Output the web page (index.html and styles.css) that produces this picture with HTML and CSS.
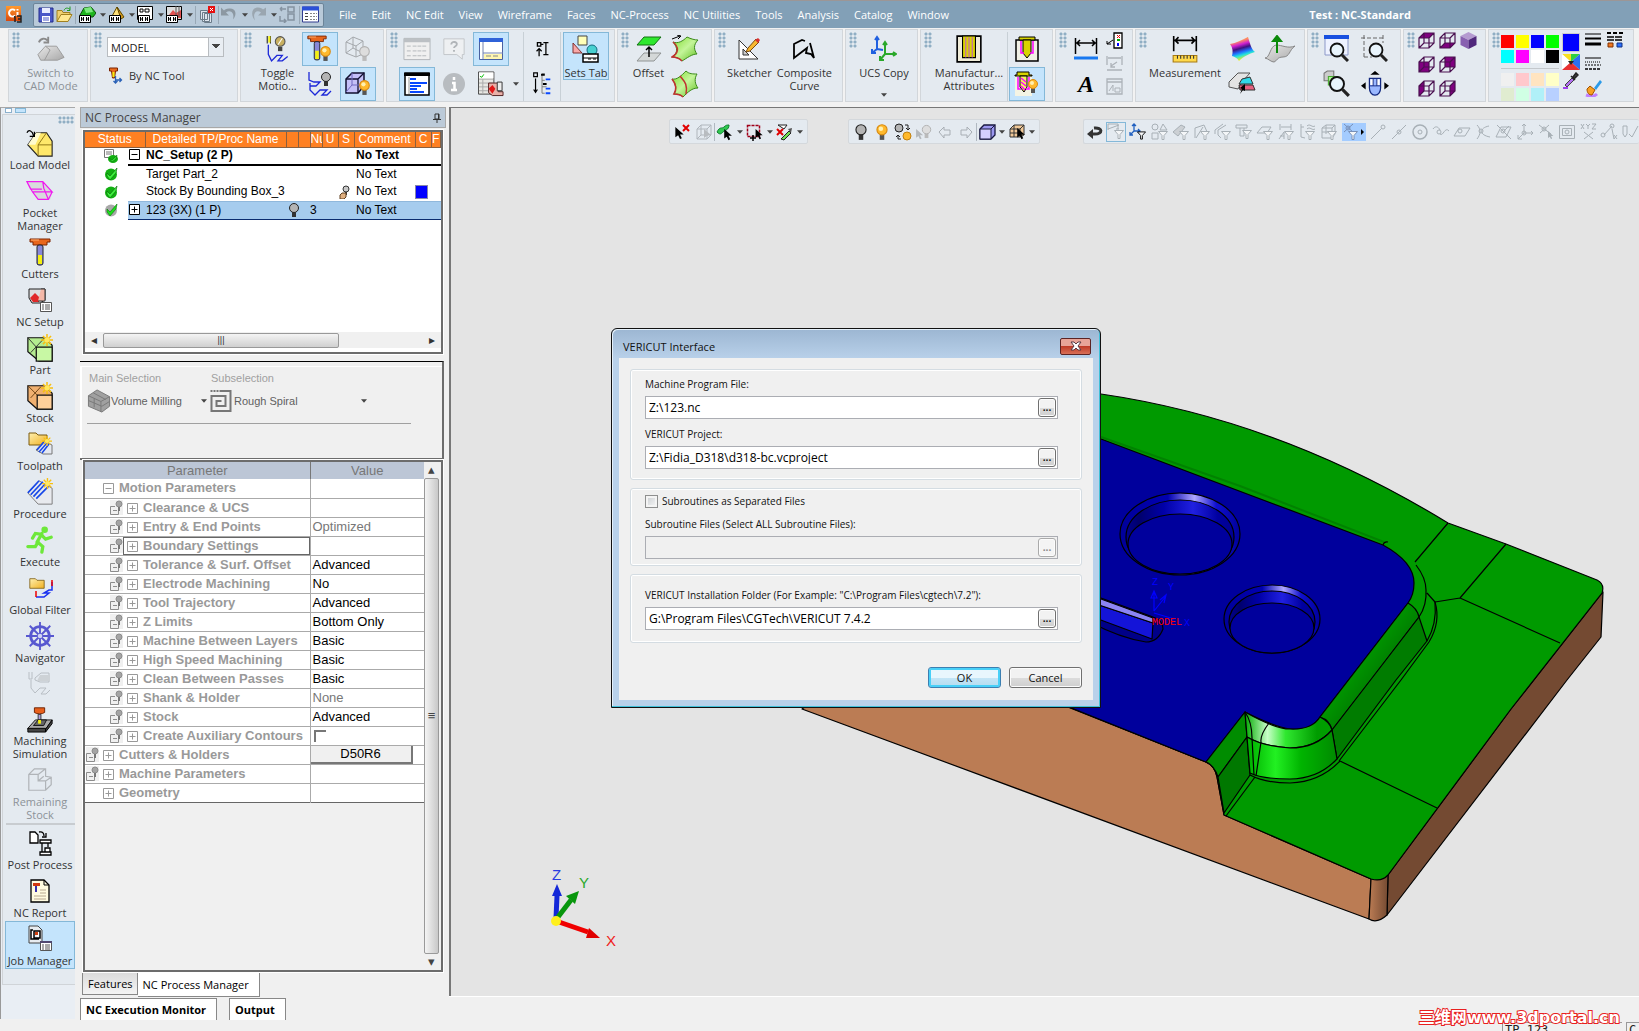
FILE: index.html
```html
<!DOCTYPE html>
<html lang="en">
<head>
    <meta charset="UTF-8">
    <meta name="viewport" content="width=device-width, initial-scale=1.0">
    <title>Test : NC-Standard</title>
    <link rel="stylesheet" href="styles.css">
</head>
<body>
    <!-- icon set -->
    <svg class="defs" aria-hidden="true">
        <defs>
            <linearGradient id="gGreen" x1="0" y1="0" x2="1" y2="1"><stop offset="0" stop-color="#7fdc2c"/><stop offset=".5" stop-color="#c4f59a"/><stop offset="1" stop-color="#5fbf1c"/></linearGradient>
            <linearGradient id="gRainbow" x1="0" y1="0" x2=".3" y2="1"><stop offset="0" stop-color="#ff4020"/><stop offset=".25" stop-color="#ff9060"/><stop offset=".4" stop-color="#d020d0"/><stop offset=".55" stop-color="#401080"/><stop offset=".7" stop-color="#2070ff"/><stop offset=".82" stop-color="#20e0e0"/><stop offset="1" stop-color="#f0f020"/></linearGradient>
            <linearGradient id="gGold" x1="0" y1="0" x2="1" y2="1"><stop offset="0" stop-color="#fff0b0"/><stop offset="1" stop-color="#f0b020"/></linearGradient>
            <linearGradient id="gGrey" x1="0" y1="0" x2="1" y2="1"><stop offset="0" stop-color="#e8e8e8"/><stop offset="1" stop-color="#a8a8a8"/></linearGradient>
            <linearGradient id="gApp" x1="0" y1="0" x2="0" y2="1"><stop offset="0" stop-color="#ff9a2e"/><stop offset="1" stop-color="#d8480c"/></linearGradient>

            <symbol id="arrow" viewBox="0 0 5 3"><path d="M0 0h5L2.500 3z" fill="#444"/></symbol>
            <symbol id="bulbOn" viewBox="0 0 16 16"><rect x="6" y="10" width="4" height="5" fill="#555"/><circle cx="8" cy="6" r="4.500" fill="#ffb92c" stroke="#d88a10"/><circle cx="7" cy="5" r="2" fill="#fff0b0"/></symbol>
            <symbol id="bulbOff" viewBox="0 0 16 16"><rect x="6" y="10" width="4" height="5" fill="#333"/><circle cx="8" cy="6" r="4.500" fill="#b4b4b4" stroke="#222"/></symbol>
            <symbol id="bulbPale" viewBox="0 0 16 16"><rect x="6" y="10" width="4" height="5" fill="#bbb"/><circle cx="8" cy="6" r="4.500" fill="#ddd" stroke="#b0b0b0"/></symbol>
            <symbol id="app" viewBox="0 0 17 17"><rect width="15" height="15" fill="url(#gApp)"/><path d="M9 4.500a3.500 3.500 0 1 0 0 5" stroke="#fff" stroke-width="2" fill="none"/><path d="M11.500 6v4M11.500 3v1.500" stroke="#fff" stroke-width="2"/><path d="M9 10v6M8 11h1M11 10h4v6h-4M12 13h3" stroke="#222" stroke-width="1.500" fill="none"/></symbol>
            <symbol id="save" viewBox="0 0 16 16"><path d="M1 1h14v14H1z" fill="#4a58c8" stroke="#232d8c"/><path d="M4 1h8v5H4z" fill="#e8ecff"/><path d="M4 9h8v6H4z" fill="#fff"/><path d="M5 11h6M5 13h6" stroke="#4a58c8"/></symbol>
            <symbol id="open" viewBox="0 0 17 16"><path d="M1 15V4h5l1 2h7v2" fill="#f0d070" stroke="#a08020"/><path d="M1 15l4-7h11l-4 7z" fill="#ffe890" stroke="#a08020"/><path d="M8 4c1-3 4-3 6-1M14 0v4h-3" stroke="#1e9a1e" fill="none"/></symbol>
            <symbol id="hh" viewBox="0 0 12 8"><path d="M.5.5h11v7H.5z" fill="#fff" stroke="#000"/><path d="M2.500 2v4M4.500 2v4M7.500 2v4M9.500 2v4M2 4h3M7 4h3" stroke="#000"/></symbol>
            <symbol id="qPart" viewBox="0 0 17 17"><path d="M1 9l4-7 7-1 5 6-3 4H4z" fill="#1eb41e" stroke="#0a500a"/><path d="M5 2l7-1 2 5-7 1z" fill="#7be87b"/><use href="#hh" x="0" y="9" width="12" height="8"/></symbol>
            <symbol id="qAsm" viewBox="0 0 17 17"><path d="M3 12L9 1l5 9z" fill="#ffe27a" stroke="#604800"/><path d="M9 1l7 10-3 2z" fill="#d09a20" stroke="#604800"/><use href="#hh" x="1" y="9" width="12" height="8"/></symbol>
            <symbol id="qDraw" viewBox="0 0 17 17"><path d="M.5.5h15v13H.5z" fill="#fff" stroke="#000"/><path d="M3 3h3v3H3zM8 3h4v3H8z" fill="none" stroke="#000"/><use href="#hh" x="1" y="9" width="12" height="8"/></symbol>
            <symbol id="qNc" viewBox="0 0 17 17"><path d="M.5.5h15v13H.5z" fill="#ddd" stroke="#000"/><path d="M3 9l4-5 3 3 5-3v8H5z" fill="#e05050"/><path d="M10 0v10M13 0v11" stroke="#555"/><use href="#hh" x="0" y="9" width="12" height="8"/></symbol>
            <symbol id="closeDocs" viewBox="0 0 17 17"><path d="M1.500 4.500h7v9h-7zM3.500 6.500h7v9h-7zM5.500 7.500h7v9h-7z" fill="#dfe6ee" stroke="#6c7c8a"/><rect x="9" width="7" height="7" fill="#e81010"/><path d="M11 2l3 3M14 2l-3 3" stroke="#fff"/></symbol>
            <symbol id="undo" viewBox="0 0 17 16"><path d="M0 1v8h8L5 6c4-3 9 0 7 7 5-6 2-12-4-11-3 0-4 1-5 2z" fill="#8c98a2"/></symbol>
            <symbol id="redo" viewBox="0 0 17 16"><path d="M16 1v8H8l3-3C7 3 2 6 5 14 0 8 2 1 8 1c3 0 4 1 5 2z" fill="#9aa6b0"/></symbol>
            <symbol id="swap" viewBox="0 0 17 17"><path d="M1 3h6M1 3l2-2M1 3l2 2M9 1h6v5H9zM1 10v5h6M5 13l2 2-2 2M9 8h6v6H9z" fill="none" stroke="#8492a0" stroke-width="1.500"/></symbol>
            <symbol id="winList" viewBox="0 0 17 16"><path d="M.5.5h16v15H.5z" fill="#fff" stroke="#333c90"/><path d="M0 0h17v4H0z" fill="#2a50d8"/><path d="M3 7h3M3 10h3M3 13h3" stroke="#444"/><path d="M8 7h7M8 10h7M8 13h7" stroke="#888" stroke-dasharray="2 1"/></symbol>

            <symbol id="cad" viewBox="0 0 30 26"><path d="M1 19l8-9h12l8 12-7 3H4z" fill="url(#gGrey)" stroke="#9a9a9a"/><path d="M9 10l5 4-6 11" fill="none" stroke="#999"/><path d="M2 6c2-5 7-5 9-2M12 0v6H7" fill="none" stroke="#8a8a8a" stroke-width="2"/></symbol>
            <symbol id="tool" viewBox="0 0 24 28"><path d="M2 1h20v3h-3v3H5V4H2z" fill="#e8661c" stroke="#7c2400"/><path d="M3 2h8" stroke="#ffb070"/><rect x="9" y="7" width="6" height="20" rx="2" fill="#8888d8" stroke="#222"/><rect x="10" y="17" width="4" height="9" fill="#f4f010"/></symbol>
            <symbol id="toolBulb" viewBox="0 0 28 28"><use href="#tool" x="0" y="0" width="22" height="26"/><use href="#bulbOn" x="11" y="10" width="17" height="17"/></symbol>
            <symbol id="toolAxis" viewBox="0 0 14 17"><path d="M1 1h8v3H7l-1 7H4L3 4H1z" fill="#e86a1c" stroke="#7c2400"/><path d="M4 5h2v5H4z" fill="#f4f010"/><path d="M7 16V9M7 13h6M11 11l2 2-2 2M5 14l2 2 2-2" stroke="#2a62b8" stroke-width="1.300" fill="none"/></symbol>
            <symbol id="motion" viewBox="0 0 24 26"><path d="M2 1v7M5 1v7" stroke="#222"/><path d="M3 1h2v6H3z" fill="#f4f010"/><path d="M3 9v9l3 6 5-5h5l-4 5h4l5-4" fill="none" stroke="#1c28d8" stroke-width="1.200"/><circle cx="14" cy="6" r="4.500" fill="#c8b060" stroke="#555"/><path d="M12 9l4-6" stroke="#fff"/><rect x="12" y="11" width="4" height="4" fill="#444"/></symbol>
            <symbol id="motionOff" viewBox="0 0 26 26"><path d="M2 1v8l5 2h6l-4 4H3M3 12v7l5 5 5-5h7l-5 5h5l4-4" fill="none" stroke="#1c28d8" stroke-width="1.300"/><use href="#bulbOff" x="11" y="0" width="16" height="16"/></symbol>
            <symbol id="wireCube" viewBox="0 0 26 26"><path d="M1 6l7-5 10 4v13l-7 3L1 17zM1 6l10 4 7-5M11 10v11M8 1v11l-7 5M8 12l10 5" fill="none" stroke="#a4a8ac"/><use href="#bulbPale" x="11" y="9" width="17" height="17"/></symbol>
            <symbol id="cubeBulb" viewBox="0 0 28 26"><path d="M2 8l6-6h12v13l-6 7H2z" fill="#c4c0f8" stroke="#101030" stroke-width="1.500"/><path d="M2 8h12v14M14 8l6-6" fill="none" stroke="#101030" stroke-width="1.300"/><path d="M8 2v12l-6 7M8 14h11" stroke="#7068c0" fill="none"/><use href="#bulbOn" x="12" y="8" width="17" height="17"/></symbol>
            <symbol id="listPale" viewBox="0 0 29 24"><path d="M1 1h27v22H1z" fill="#f0f0f0" stroke="#b0b4b8"/><path d="M1 1h27v4H1z" fill="#bcc0c4"/><path d="M4 9h4M4 14h4M4 19h4M10 9h15M10 14h15M10 19h15" stroke="#b4b8bc" stroke-dasharray="4 1"/></symbol>
            <symbol id="help" viewBox="0 0 26 24"><path d="M2 1h22v17h-2v5l-6-5H2z" fill="#eef0f2" stroke="#c0c4c8"/><path d="M10 7c0-4 7-3 6 0 0 2-3 2-3 4M13 13v2" stroke="#b0b4b8" stroke-width="2" fill="none"/></symbol>
            <symbol id="winLayout" viewBox="0 0 24 22"><path d="M.5.500h23v21H.5z" fill="#fff" stroke="#4a60a0"/><path d="M0 0h24v4H0z" fill="#2f62d8"/><path d="M4 4v17M4 15h20" stroke="#7080b0"/><path d="M5 16h18v5H5z" fill="#fff6b0"/><path d="M7 18h5M14 18h5" stroke="#888"/></symbol>
            <symbol id="gantt" viewBox="0 0 26 24"><path d="M1 1h24v22H1z" fill="#fff" stroke="#000" stroke-width="1.500"/><path d="M0 1h26v3H0z" fill="#000"/><path d="M6 7h6M6 11h17M6 14h11M6 17h7M6 20h14" stroke="#0848ff" stroke-width="2"/><path d="M5 5v17" stroke="#999"/></symbol>
            <symbol id="info" viewBox="0 0 24 24"><circle cx="12" cy="12" r="11" fill="#b8bcc0"/><path d="M12 5v3M10 11h2.500v7M9 18h6" stroke="#fff" stroke-width="2.500" fill="none"/></symbol>
            <symbol id="ncTable" viewBox="0 0 27 26"><path d="M.5.500h16v23H.5z" fill="#e8e8e4" stroke="#444"/><path d="M1 8h15M1 12h15M1 16h15M1 20h15M5 8v15" stroke="#aaa"/><path d="M1 1h15v6H1z" fill="#fff"/><path d="M2 5l2 1 2-3" stroke="#0b0" fill="none"/><path d="M11 12h10v9h5v4H15l-4-3z" fill="#e8b0a8" stroke="#502020"/><path d="M11 18l4-4 3 4-3 5z" fill="#e01818"/><path d="M20 11h5v9h-5z" fill="#eee" stroke="#333"/></symbol>
            <symbol id="treeUp" viewBox="0 0 16 20"><path d="M2 2h4v4H2zM4 18V9M1 12l3-3 3 3M6 4h3M9 2h6M9 16h6M12 2v14" fill="none" stroke="#000" stroke-width="1.500"/></symbol>
            <symbol id="treeDown" viewBox="0 0 20 26"><path d="M1 1h4v4H1zM3 7v15M1 19l2 3 2-3" fill="none" stroke="#000" stroke-width="1.300"/><path d="M10 2v21M10 2h3M10 9h3M10 23h3M10 16h5" stroke="#777" fill="none"/><path d="M14 8h5M14 18h5M14 23h5" stroke="#0848ff" stroke-width="2"/><path d="M9 3h4M11 13h4" stroke="#000" stroke-width="2"/></symbol>
            <symbol id="sets" viewBox="0 0 28 28"><path d="M6 1h9v9H6z" fill="#ffffb8" stroke="#444"/><path d="M1 8l9 10H1z" fill="#f8a8a8" stroke="#803030"/><circle cx="20" cy="15" r="5" fill="#48d0d0" stroke="#146a80"/><path d="M11 19h15v8H11z" fill="#fff" stroke="#000" stroke-width="1.500"/><path d="M11 23h15M16 24h3M21 24h3" stroke="#000"/></symbol>
            <symbol id="offset" viewBox="0 0 26 26"><path d="M8 1h17l-7 8H1z" fill="#2ee82e" stroke="#127012"/><path d="M8 17h17l-7 8H1z" fill="#d4d8d8" stroke="#909494"/><path d="M13 21V12M10 14l3-3 3 3" stroke="#000" stroke-width="1.500" fill="none"/></symbol>
            <symbol id="surfA" viewBox="0 0 28 28"><path d="M2 7c5 2 10-1 14-5 4 2 8 3 11 3-5 5-4 10-1 14-5 0-10 4-15 7-3-3-6-4-10-4 6-4 6-9 1-15z" fill="url(#gGreen)" stroke="#3c8a1c"/><path d="M2 7c6 5 6 11-1 15 4 0 7 1 10 4" stroke="#c03030" fill="none" stroke-width="1.500"/><path d="M1 4l8-3M6 0l4 1-3 3" stroke="#000" fill="none"/></symbol>
            <symbol id="surfB" viewBox="0 0 28 28"><path d="M1 9c5 1 9-3 14-8 3 3 7 3 11 3-3 5-2 10 1 14-6 0-10 4-15 9-3-3-6-3-9-3 3-5 2-10-2-15z" fill="url(#gGreen)" stroke="#3c8a1c"/><path d="M1 9c4 5 5 10 2 15 3 0 6 0 9 3M9 6c4 5 8 8 6 18" stroke="#c03030" fill="none" stroke-width="1.500"/></symbol>
            <symbol id="sketch" viewBox="0 0 24 24"><path d="M2 3v19h19z" fill="#fff" stroke="#333"/><path d="M6 12v6h6z" fill="#ccc" stroke="#333"/><path d="M9 15l2-4L19 2l3 3-9 9z" fill="#f8b830" stroke="#7a4a10"/><path d="M18 3l3-2 2 2-2 3z" fill="#d83030"/></symbol>
            <symbol id="curve" viewBox="0 0 24 24"><path d="M9 3L2 8v9l0 4 12-9M9 3l3 0M2 21V7l10-4-1 8 7-3 4 14M12 14l5-6" fill="none" stroke="none"/><path d="M13 4l-3-1-8 4v14l13-10-1 5 5 1 3 4-4-15" fill="none" stroke="#000" stroke-width="1.800"/></symbol>
            <symbol id="ucs" viewBox="0 0 26 26"><path d="M6 13V2M4 4l2-3 2 3M6 13l6 1M6 13l-5 4M1 13v4h4" fill="none" stroke="#2060e0" stroke-width="2"/><path d="M14 18V7M12 9l2-3 2 3M14 18h10M22 16l3 2-3 2M14 18l-5 6M9 20v4h4" fill="none" stroke="#2aa82a" stroke-width="2"/></symbol>
            <symbol id="mfg" viewBox="0 0 24 26"><path d="M1 1h22v24H1z" fill="#f0ecd8" stroke="#000" stroke-width="1.500"/><path d="M6 1v20h12V1z" fill="#d8d400" stroke="#000"/><path d="M9 2v19M12 2v19M15 2v19" stroke="#c060c0"/></symbol>
            <symbol id="drill" viewBox="0 0 24 26"><path d="M1 4h22v21H1z" fill="#f0f0e4" stroke="#000" stroke-width="1.500"/><path d="M4 1h16v3H4z" fill="#d8d400" stroke="#000"/><path d="M8 4h8v13l-4 5-4-5z" fill="#d8d400" stroke="#000"/><path d="M6 5v12h3M18 5v12h-3" stroke="#f0f" fill="none" stroke-width="1.500"/></symbol>
            <symbol id="drillBulb" viewBox="0 0 26 26"><path d="M1 3h17v22H1z" fill="#f4f4e4"/><path d="M3 1h12v3h3v1H1V4h2z" fill="#d8d400" stroke="#000"/><path d="M6 5h7v11l-3 5-4-5z" fill="#f4f060" stroke="#000"/><path d="M4 6v12h3M15 6v12h-3M7 7l5 4M7 11l5 4M7 15l4 4" stroke="#f0f" fill="none" stroke-width="1.500"/><use href="#bulbOn" x="11" y="7" width="16" height="16"/></symbol>
            <symbol id="dim" viewBox="0 0 24 24"><path d="M1.500 1v16M22.500 1v16M2 6h20M6 3L3 6l3 3M18 3l3 3-3 3" stroke="#000" fill="none" stroke-width="1.500"/><path d="M0 21h24" stroke="#1878f0" stroke-width="3"/></symbol>
            <symbol id="note" viewBox="0 0 17 17"><path d="M8 1h8v15H8z" fill="#fff" stroke="#000" stroke-width="1.300"/><path d="M7 8L1 12M1 9v3h4" stroke="#000" fill="none"/><path d="M11 3l3 3M14 3l-3 3" stroke="#e00"/><path d="M11 8h3" stroke="#0a0" stroke-width="2"/><path d="M12 11v3" stroke="#00f" stroke-width="2"/></symbol>
            <symbol id="dimPale" viewBox="0 0 17 17"><path d="M1 1v9M16 1v9M2 3h13M5 11l6-4M5 8v4h4M1 15h15" stroke="#acb2b8" fill="none" stroke-width="1.300"/></symbol>
            <symbol id="textPale" viewBox="0 0 17 17"><path d="M1 1h15v15H1zM1 4h15" stroke="#acb2b8" fill="none" stroke-width="1.300"/><path d="M3 13l4-6v6M9 10h5v4H9z" stroke="#acb2b8" fill="none"/></symbol>
            <symbol id="measure" viewBox="0 0 24 26"><path d="M1.500 1v14M22.500 1v14M2 5h20M6 2L3 5l3 3M18 2l3 3-3 3" stroke="#000" fill="none" stroke-width="1.500"/><path d="M1 19h22v6H1z" fill="#ffd94a" stroke="#a87a10"/><path d="M5 19v3M8 19v3M11 19v3M14 19v3M17 19v3M20 19v3" stroke="#333"/></symbol>
            <symbol id="rainbow" viewBox="0 0 28 28"><path d="M2 9c6-1 12-4 18-7 2 6 3 12 7 15-6 2-11 4-16 9-2-3-4-4-7-5 1-4 1-8-2-12z" fill="url(#gRainbow)"/></symbol>
            <symbol id="normal" viewBox="0 0 32 28"><path d="M1 23c5 0 5-12 11-13 6 0 12 4 19 1-6 4-5 11-12 11-6 0-6 4-9 5-3 0-5-3-9-4z" fill="url(#gGrey)" stroke="#888"/><path d="M13 18V3M9 6l4-5 4 5z" stroke="#0a8a0a" stroke-width="2" fill="#0a8a0a"/></symbol>
            <symbol id="pick" viewBox="0 0 28 24"><path d="M1 10L10 1h12l-8 9-4 7-9-2z" fill="#e4e4e4" stroke="#555"/><path d="M14 7l8-2 3 7H11z" fill="#30d8e8" stroke="#333"/><path d="M11 13h14l2 5H12z" fill="#e86080" stroke="#333"/><path d="M17 12l-5 4 2 1-2 5 3-4 2 1z" fill="#000"/></symbol>
            <symbol id="lens" viewBox="0 0 20 20"><circle cx="8" cy="8" r="6.500" fill="#e8f4fc" stroke="#111" stroke-width="1.800"/><path d="M13 13l6 6" stroke="#222" stroke-width="3"/></symbol>
            <symbol id="zoomWin" viewBox="0 0 26 28"><path d="M1 1h23v19H1z" fill="#eef2ff" stroke="#8c98c8"/><path d="M0 0h25v4H0z" fill="#1850e0"/><use href="#lens" x="5" y="7" width="20" height="20"/></symbol>
            <symbol id="zoomBox" viewBox="0 0 28 28"><path d="M3 0v22M0 3h22M22 0v8M3 22h8" stroke="#666" stroke-dasharray="4 2" fill="none"/><use href="#lens" x="7" y="7" width="20" height="20"/></symbol>
            <symbol id="zoomPart" viewBox="0 0 26 26"><path d="M1 3l3-2h6v7l-3 2H1z" fill="#ccc" stroke="#777"/><path d="M5 6h9v8H5z" fill="#a8f890" stroke="#48a830"/><use href="#lens" x="5" y="5" width="20" height="20"/></symbol>
            <symbol id="mouse" viewBox="0 0 30 28"><path d="M10 4l5-4 5 4zM0 16l5-4v8zM30 16l-5-4v8z" fill="#000"/><path d="M9 8h12v10c0 4-2 8-6 8s-6-4-6-8z" fill="#9ab8ff" stroke="#142a80" stroke-width="1.300"/><path d="M10 9h3v6h-3zM17 9h3v6h-3z" fill="#fff"/><path d="M9 16h12M13 8v8M17 8v8" stroke="#142a80"/></symbol>
            <symbol id="cw" viewBox="0 0 17 17"><path d="M1 6l5-5h10v10l-5 5H1zM1 6h10v10M11 6l5-5M6 1v10l-5 5M6 11h10" fill="none" stroke="#4a1050" stroke-width="1.200"/></symbol>
            <symbol id="cTop" viewBox="0 0 17 17"><path d="M1 6l5-5h10l-5 5z" fill="#800080"/><use href="#cw"/></symbol>
            <symbol id="cBot" viewBox="0 0 17 17"><path d="M1 16l5-5h10l-5 5z" fill="#800080"/><use href="#cw"/></symbol>
            <symbol id="cIso" viewBox="0 0 17 17"><path d="M8.500 0l8 4-8 4-8-4z" fill="#b49ad0"/><path d="M.5 4l8 4v9l-8-4z" fill="#8860b0"/><path d="M16.500 4l-8 4v9l8-4z" fill="#50287c"/></symbol>
            <symbol id="cFront" viewBox="0 0 17 17"><path d="M1 6h10v10H1z" fill="#800080"/><use href="#cw"/></symbol>
            <symbol id="cBack" viewBox="0 0 17 17"><path d="M6 1h10v10H6z" fill="#800080"/><use href="#cw"/></symbol>
            <symbol id="cLeft" viewBox="0 0 17 17"><path d="M1 6l5-5v10l-5 5z" fill="#800080"/><use href="#cw"/></symbol>
            <symbol id="cRight" viewBox="0 0 17 17"><path d="M11 6l5-5v10l-5 5z" fill="#800080"/><use href="#cw"/></symbol>
            <symbol id="wheel" viewBox="0 0 18 16"><path d="M0 0h9v8z" fill="#f8e020"/><path d="M9 0h9L9 8z" fill="#30d040"/><path d="M18 0v16L9 8z" fill="#2a70f0"/><path d="M0 0l9 8-9 8z" fill="#fff"/><path d="M0 16l9-8 9 8z" fill="#e83030"/><path d="M6 7h6l-3 4z" fill="#222"/></symbol>
            <symbol id="dropper" viewBox="0 0 17 17"><path d="M3 13l7-7 2 2-7 7z" fill="#b070f0" stroke="#444"/><path d="M9 4l4 4M11 5l3-4 2 2-4 4z" stroke="#222" fill="#444" stroke-width="1.500"/><path d="M1 16h5" stroke="#a040f0" stroke-width="2"/></symbol>
            <symbol id="widths" viewBox="0 0 16 16"><path d="M0 2h16" stroke="#000"/><path d="M0 6.500h16" stroke="#000" stroke-width="2"/><path d="M0 12h16" stroke="#000" stroke-width="3"/></symbol>
            <symbol id="styles" viewBox="0 0 16 16"><path d="M0 2h16" stroke="#000"/><path d="M0 6h16" stroke="#000" stroke-dasharray="1 1"/><path d="M0 9h16" stroke="#000" stroke-dasharray="2 1"/><path d="M0 13h16" stroke="#000" stroke-width="1.500" stroke-dasharray="3 1"/></symbol>
            <symbol id="lineCol" viewBox="0 0 16 16"><path d="M0 1h16" stroke="#000" stroke-width="2" stroke-dasharray="4 2"/><path d="M0 5h16M0 8h16" stroke="#000" stroke-width="1.500" stroke-dasharray="7 1"/><path d="M1 11h5v4H1z" fill="#f07820" stroke="#803000"/><path d="M10 11h5v4h-5z" fill="#2a70ff" stroke="#103080"/></symbol>
            <symbol id="brush" viewBox="0 0 17 17"><path d="M1 15c5 2 9 1 11-1" stroke="#c080ff" stroke-width="3" fill="none"/><path d="M2 9l3-3 5 4-3 5c-3 0-5-2-5-6z" fill="#f8a020" stroke="#a05000"/><path d="M9 8l6-8 2 2-6 8z" fill="#2a9ae8"/></symbol>

            <symbol id="star" viewBox="0 0 12 12"><path d="M6 0v12M0 6h12M2 2l8 8M10 2l-8 8" stroke="#f8c010" stroke-width="1.500"/><circle cx="6" cy="6" r="2.500" fill="#ffe860"/></symbol>
            <symbol id="load" viewBox="0 0 30 30"><path d="M2 17l9-13h11l6 9v16H13z" fill="#ffe86a" stroke="#222" stroke-width="1.200"/><path d="M2 17l9-13h5l-6 13z" fill="#fffbd0"/><path d="M13 29V17l9-13M13 17h15" fill="none" stroke="#8a7010"/><path d="M1 4c2-4 6-2 7 3M9 3v5H4" stroke="#000" fill="none" stroke-width="1.300"/></symbol>
            <symbol id="pocket" viewBox="0 0 30 24"><path d="M1 2h17l10 11-2 8H13z" fill="#d8dadc"/><path d="M1 2h17l10 11H7zM7 13l6 8h11l4-8M18 2l1 7 5 12M1 2l4 8h12" fill="none" stroke="#f018f0" stroke-width="1.300"/></symbol>
            <symbol id="setup" viewBox="0 0 28 28"><path d="M3 3h16v11l-5 3H6L3 12z" fill="#ddd" stroke="#222"/><path d="M4 12l5-5 4 4v5H7z" fill="#e02828"/><path d="M15 3h4v12h-7" fill="#f4b8a8" stroke="#333"/><path d="M14.500 16.500h11v9h-11z" fill="#fff" stroke="#555"/><path d="M16 19h2M16 21h2M16 23h2M19 19h5M19 21h5M19 23h5" stroke="#555"/></symbol>
            <symbol id="part" viewBox="0 0 30 30"><path d="M2 4h18l8 8v17H14L2 19z" fill="#b4ec90" stroke="#111" stroke-width="1.300"/><path d="M11 14h17v15H11z" fill="#c8f8a4" stroke="#111" stroke-width="1.300"/><path d="M2 4l9 10M5 20L20 4" stroke="#333" fill="none"/><use href="#star" x="16" y="0" width="13" height="13"/></symbol>
            <symbol id="stock" viewBox="0 0 30 30"><path d="M2 4h18l8 8v17H12L2 20z" fill="#f0b070" stroke="#111" stroke-width="1.300"/><path d="M12 14h16v15H12z" fill="#ffd09a" stroke="#111" stroke-width="1.300"/><path d="M2 4l10 10M5 17L16 5" stroke="#6a4010" fill="none"/><use href="#star" x="16" y="0" width="13" height="13"/></symbol>
            <symbol id="folder" viewBox="0 0 20 16"><path d="M1 2h7l2 2h9v10H1z" fill="url(#gGold)" stroke="#7a5a10"/></symbol>
            <symbol id="toolpath" viewBox="0 0 28 28"><use href="#folder" x="2" y="1" width="20" height="16"/><path d="M10 20l8-9 8 4v9h-9z" fill="#e4e8f0" stroke="#777"/><path d="M11 20l7-8M13 22l8-9M16 23l7-9" stroke="#1848e8" stroke-width="1.500"/><use href="#star" x="16" y="6" width="10" height="10"/></symbol>
            <symbol id="proc" viewBox="0 0 30 30"><path d="M2 16L14 3l14 8v17H13z" fill="#e8eaee" stroke="#777"/><path d="M2 16L14 3M5 18L18 4M8 20L20 7M11 22L24 9" stroke="#1848e8" stroke-width="1.800" fill="none"/><use href="#star" x="17" y="0" width="12" height="12"/></symbol>
            <symbol id="run" viewBox="0 0 30 30"><circle cx="20" cy="4" r="3.500" fill="#6ee83a"/><path d="M17 8l-5 9 6 5-1 6M13 17l-3 5H2M17 9L10 8l-3 5M17 10l4 4 6-2" stroke="#6ee83a" stroke-width="3.500" fill="none" stroke-linecap="round"/></symbol>
            <symbol id="gfilter" viewBox="0 0 28 28"><use href="#folder" x="3" y="3" width="16" height="13"/><path d="M26 8v8h-3l-5 3h5l-5 4h-8" stroke="#1830f0" fill="none" stroke-width="1.500"/><path d="M26 6v6M10 17v6" stroke="#e00" stroke-width="1.500"/></symbol>
            <symbol id="helm" viewBox="0 0 30 30"><path d="M15 0v30M0 15h30M4 4l22 22M26 4L4 26" stroke="#5858d0" stroke-width="2"/><circle cx="15" cy="15" r="10" fill="none" stroke="#5858d0" stroke-width="3"/><circle cx="15" cy="15" r="3" fill="#d0d4f4" stroke="#5858d0"/></symbol>
            <symbol id="handPale" viewBox="0 0 28 28"><path d="M3 2v7h3V2M5 10v8l4 5 5-5h6l-5 6h5l4-4M9 8l6-5h8v9h-9l-5-2z" fill="none" stroke="#b8bec4"/><path d="M14 5h10v6H11z" fill="#cdd2d6"/></symbol>
            <symbol id="machine" viewBox="0 0 28 30"><path d="M8 3h11v5c-3 2-8 2-11 0z" fill="#e8601c" stroke="#6a2000"/><path d="M12 10h3v8h-3z" fill="#b0a0e0" stroke="#333"/><path d="M1 25l8-9h18l-7 10H1z" fill="#aaa" stroke="#111"/><path d="M7 22l5-6h9l-3 6z" fill="#666" stroke="#111"/><path d="M1 25h19v4H1zM20 26l7-10v4l-7 9z" fill="#444" stroke="#000"/><path d="M12 16h3v4h-3z" fill="#f4f010"/></symbol>
            <symbol id="remain" viewBox="0 0 30 30"><path d="M3 9l6-6h12v8l6 1v8l-6 6H3zM3 9h10v7h8v10M13 9l8-6M21 16l6-4M13 16l6-5" fill="none" stroke="#b0b4b8" stroke-width="1.300"/></symbol>
            <symbol id="post" viewBox="0 0 28 28"><path d="M4 3h5l3 3v8H4z" fill="#fff" stroke="#000" stroke-width="1.300"/><path d="M13 3c4-1 5 2 5 4M20 4v4h-4" fill="none" stroke="#000" stroke-width="1.300"/><path d="M14 11h11v3H14zM16 14v9M22 14v4M14 23h11v3H14zM19 19h5v4h-5z" fill="#fff" stroke="#000" stroke-width="1.300"/></symbol>
            <symbol id="report" viewBox="0 0 24 28"><path d="M3 3h13l5 5v17H3z" fill="#fffbe0" stroke="#000" stroke-width="1.300"/><path d="M16 3v5h5" fill="none" stroke="#000"/><path d="M5 6h7v3H5z" fill="#d03810"/><path d="M8 9v6" stroke="#3830b0" stroke-width="2"/><path d="M12 13h6M12 16h6M6 19h12M6 22h12" stroke="#b8a890"/></symbol>
            <symbol id="job" viewBox="0 0 28 28"><path d="M3 1h9l4 4v13H3z" fill="#e8ecf0" stroke="#444"/><path d="M7 5H5v9h8M8 6h6v7H8z" stroke="#000" stroke-width="1.500" fill="#fff"/><path d="M9 7h3v3H9z" fill="#d04010"/><path d="M14.500 16.500h11v9h-11z" fill="#fff" stroke="#555"/><path d="M14 17h12" stroke="#504870" stroke-width="2"/><path d="M16 20h2M16 22h2M16 24h2M19 20h5M19 22h5M19 24h5" stroke="#555"/></symbol>

            <symbol id="ok" viewBox="0 0 14 14"><circle cx="7" cy="7.500" r="6" fill="#12b012"/><path d="M3 6l3 3 7-8-1 5-6 7-3-4z" fill="#3cf03c" stroke="#086008" stroke-width=".6"/></symbol>
            <symbol id="okGrey" viewBox="0 0 14 14"><circle cx="7" cy="7.500" r="6" fill="#a8a8a8"/><path d="M3 6l3 3 7-8-1 5-6 7-3-4z" fill="#1ce01c" stroke="#0a700a" stroke-width=".6"/></symbol>
            <symbol id="okList" viewBox="0 0 14 14"><path d="M.5.5h9v8h-9z" fill="#fff" stroke="#777"/><path d="M2 3h6M2 5h6" stroke="#777"/><ellipse cx="9" cy="10" rx="5" ry="4" fill="#12b012"/><path d="M5 9l3 2 5-5-1 4-4 3z" fill="#30e030" stroke="#086008" stroke-width=".5"/></symbol>
            <symbol id="plus" viewBox="0 0 11 11"><path d="M.5.5h10v10H.5z" fill="#fff" stroke="currentColor"/><path d="M2.500 5.500h6M5.500 2.500v6" stroke="currentColor"/></symbol>
            <symbol id="minus" viewBox="0 0 11 11"><path d="M.5.5h10v10H.5z" fill="#fff" stroke="currentColor"/><path d="M2.500 5.500h6" stroke="currentColor"/></symbol>
            <symbol id="pin" viewBox="0 0 13 15"><path d="M0 0h13v15H0z" fill="#f0f0f0"/><path d="M5 6.500H.5v8h8V11M3 10.500h4" stroke="#8c8c8c" fill="none"/><circle cx="9" cy="4" r="3" fill="#a4a4a4" stroke="#8c8c8c"/><path d="M9 7v4" stroke="#777" stroke-width="2"/></symbol>
            <symbol id="bulbBox" viewBox="0 0 12 14"><circle cx="7" cy="4" r="3" fill="#c8c8c8" stroke="#333"/><path d="M7 7v3" stroke="#333" stroke-width="2"/><path d="M1 10l2-2h4v4l-2 2H1z" fill="#e0b080" stroke="#604020"/></symbol>
            <symbol id="tack" viewBox="0 0 8 10"><path d="M2 1h4v5H2zM0 6.500h8M4 7v3" fill="none" stroke="#333"/><path d="M5.500 1v5" stroke="#333"/></symbol>
            <symbol id="vmill" viewBox="0 0 24 25"><path d="M1 7l9-6 13 7v10l-8 6L1 18z" fill="#a0a0a0" stroke="#777"/><path d="M1 7l13 6 9-5M14 13v11M6 4l13 7M7 10v9M1 12l14 6 8-5" fill="none" stroke="#787878"/></symbol>
            <symbol id="spiral" viewBox="0 0 21 22"><path d="M0 1h8" stroke="#777" stroke-width="2" stroke-dasharray="2 1"/><path d="M9 1h11v20H1V6h14v10H6v-5h5" fill="none" stroke="#777" stroke-width="2"/></symbol>

            <symbol id="cursor" viewBox="0 0 10 14"><path d="M0 0v11l3-2 2 4 2-1-2-4h4z" fill="currentColor"/></symbol>
            <symbol id="tSelX" viewBox="0 0 18 18"><use href="#cursor" x="1" y="4" width="10" height="13"/><path d="M9 2l6 6M15 2l-6 6" stroke="#e00000" stroke-width="2"/></symbol>
            <symbol id="tBoxPale" viewBox="0 0 18 18"><path d="M2 6l4-4h10v10l-4 4H2zM2 6h10v10M12 6l4-4M6 2v10l-4 4M6 12h10" stroke="#b0b6bc" fill="none"/><path d="M9 6v9l4-3h3z" fill="#b8bcc0"/></symbol>
            <symbol id="tGreen" viewBox="0 0 18 18"><path d="M1 9c3-6 5-3 7-5s3-2 5-2c0 5-4 5-6 7s-3 3-6 0z" fill="#30c850" stroke="#108030"/><use href="#cursor" x="8" y="6" width="9" height="12"/></symbol>
            <symbol id="tDash" viewBox="0 0 18 18"><path d="M1.500 2.500h12v11h-12z" fill="none" stroke="#a00018" stroke-width="1.500" stroke-dasharray="3 1"/><path d="M4 15h6M7 12v6" stroke="#000" stroke-width="1.500"/><use href="#cursor" x="9" y="6" width="9" height="11"/></symbol>
            <symbol id="tDrop" viewBox="0 0 18 18"><path d="M2 2h9L8 6z" fill="#fff" stroke="#222"/><path d="M1 6l6 6M7 6l-6 6" stroke="#e00000" stroke-width="2"/><path d="M5 16l8-8 2 2-7 7z" fill="#70e050" stroke="#222"/><path d="M12 6l4-1-1 5z" fill="#555"/></symbol>
            <symbol id="tSwap" viewBox="0 0 18 18"><circle cx="5" cy="5" r="4" fill="#b4b4b4" stroke="#222"/><circle cx="13" cy="13" r="4" fill="#ffb92c" stroke="#c08010"/><path d="M11 2h3v4M12 5l2 2 2-2M7 16H4v-4M2 14l2-2 2 2" stroke="#222" fill="none"/></symbol>
            <symbol id="tBulbPale" viewBox="0 0 18 18"><use href="#cursor" x="1" y="6" width="8" height="11" color="#b4b8bc"/><use href="#bulbPale" x="4" y="1" width="15" height="15"/></symbol>
            <symbol id="tLeft" viewBox="0 0 18 18"><path d="M3 9l5-5v3h6v5H8v3z" fill="none" stroke="#a8aeb4"/></symbol>
            <symbol id="tRight" viewBox="0 0 18 18"><path d="M15 9l-5-5v3H4v5h6v3z" fill="none" stroke="#a8aeb4"/></symbol>
            <symbol id="tCube" viewBox="0 0 18 18"><path d="M2 6l4-4h11v10l-4 4H2z" fill="#9c98f0" stroke="#181840" stroke-width="1.300"/><path d="M2 6h11v10H2z" fill="#d4d0ff" stroke="#181840"/><path d="M13 6l4-4" stroke="#181840"/></symbol>
            <symbol id="tBoxSel" viewBox="0 0 18 18"><path d="M2 6l4-4h10v10l-4 2H2z" fill="#f0c898" stroke="#333"/><path d="M2 6h10v8M12 6l4-4M6 2v12M2 10h10" fill="none" stroke="#333"/><use href="#cursor" x="9" y="5" width="9" height="12"/></symbol>

            <symbol id="funnel" viewBox="0 0 10 9"><path d="M.5.5h9L6 4.500v4H4v-4z" fill="#f4f6f8" stroke="currentColor"/></symbol>
            <symbol id="fUndo" viewBox="0 0 18 18"><path d="M5 11h4c8 0 8-7-1-6" fill="none" stroke="#333" stroke-width="3"/><path d="M7 6v10l-6-5z" fill="#333"/></symbol>
            <symbol id="f0" viewBox="0 0 18 18"><path d="M1 7V1h10v5M1 6l11-4M9 6h3" stroke="currentColor" fill="none"/><use href="#funnel" x="7" y="7" width="10" height="9"/></symbol>
            <symbol id="fAxis" viewBox="0 0 18 18"><path d="M5 8V1M3 3l2-2 2 2M5 8h6M9 6l2 2-2 2M5 8l-4 4M1 9v3h3" stroke="#2060c0" stroke-width="1.300" fill="none"/><use href="#funnel" x="8" y="8" width="9" height="9" color="#000"/></symbol>
            <symbol id="f1" viewBox="0 0 18 18"><circle cx="4" cy="4" r="3" stroke="currentColor" fill="none"/><path d="M9 7l3-6 4 6zM1 10h6v6H1z" stroke="currentColor" fill="none"/><use href="#funnel" x="7" y="8" width="10" height="9"/></symbol>
            <symbol id="f2" viewBox="0 0 18 18"><path d="M1 9l8-7 4 2-7 9z" fill="#ccd0d4" stroke="currentColor"/><use href="#funnel" x="7" y="8" width="10" height="9"/></symbol>
            <symbol id="f3" viewBox="0 0 18 18"><path d="M2 15V5l9-3 4 9M3 15l7-11" stroke="currentColor" fill="none"/><use href="#funnel" x="7" y="8" width="10" height="9"/></symbol>
            <symbol id="f4" viewBox="0 0 18 18"><path d="M12 2L4 7v5l3 3M9 1L1 7v4" stroke="currentColor" fill="none"/><use href="#funnel" x="7" y="8" width="10" height="9"/></symbol>
            <symbol id="f5" viewBox="0 0 18 18"><path d="M1 2h11v3H1zM5 5v8h4V5" stroke="currentColor" fill="none"/><use href="#funnel" x="7" y="7" width="10" height="9"/></symbol>
            <symbol id="f6" viewBox="0 0 18 18"><path d="M6 4h9l-4 6H1z" stroke="currentColor" fill="none"/><use href="#funnel" x="7" y="8" width="10" height="9"/></symbol>
            <symbol id="f7" viewBox="0 0 18 18"><path d="M3 1v6M14 1v6M4 4h10M2 16l5-7v7M3 13h4" stroke="currentColor" fill="none"/><use href="#funnel" x="7" y="8" width="10" height="9"/></symbol>
            <symbol id="f8" viewBox="0 0 18 18"><path d="M2 1v13l4 1M2 4h3M8 3c3-3 5 2 8 0M8 6c3-3 5 2 8 0" stroke="currentColor" fill="none"/><use href="#funnel" x="6" y="8" width="10" height="9"/></symbol>
            <symbol id="f9" viewBox="0 0 18 18"><path d="M2 5l4-3h9v9l-3 4H2zM2 5h10v8M12 5l3-3M2 9h10M6 2v9" stroke="currentColor" fill="none"/><use href="#funnel" x="7" y="8" width="10" height="9"/></symbol>
            <symbol id="f10" viewBox="0 0 24 18"><path d="M2 1l9 8M11 1L2 9" stroke="currentColor"/><circle cx="6" cy="5" r="2" fill="none" stroke="currentColor"/><use href="#funnel" x="6" y="8" width="10" height="9"/><path d="M19 6l3 3-3 3z" fill="#000"/></symbol>
            <symbol id="s1" viewBox="0 0 18 18"><path d="M2 16L13 5" stroke="currentColor"/><circle cx="14" cy="4" r="2" fill="none" stroke="currentColor"/></symbol>
            <symbol id="s2" viewBox="0 0 18 18"><path d="M2 16L16 2" stroke="currentColor"/><circle cx="9" cy="9" r="2" fill="none" stroke="currentColor"/></symbol>
            <symbol id="s3" viewBox="0 0 18 18"><circle cx="9" cy="9" r="7" fill="none" stroke="currentColor" stroke-width="1.500"/><circle cx="9" cy="9" r="2" fill="none" stroke="currentColor"/></symbol>
            <symbol id="s4" viewBox="0 0 18 18"><path d="M1 6c2-3 5-3 7 1M8 11c3 3 5-8 9-3" fill="none" stroke="currentColor"/><circle cx="7" cy="9" r="2" fill="none" stroke="currentColor"/></symbol>
            <symbol id="s5" viewBox="0 0 18 18"><path d="M6 5h11l-5 8H1z" fill="none" stroke="currentColor"/><circle cx="7" cy="8" r="2" fill="none" stroke="currentColor"/></symbol>
            <symbol id="s6" viewBox="0 0 18 18"><path d="M3 2c4 4 4 9 0 14M15 3C5 5 5 12 16 14" fill="none" stroke="currentColor"/><circle cx="7" cy="8" r="2" fill="none" stroke="currentColor"/></symbol>
            <symbol id="s7" viewBox="0 0 18 18"><path d="M6 4h10l-5 10H1zM2 2l14 14M8 9l6-6" fill="none" stroke="currentColor"/><circle cx="8" cy="8" r="2" fill="none" stroke="currentColor"/></symbol>
            <symbol id="s8" viewBox="0 0 18 18"><path d="M8 10V1M6 3l2-2 2 2M8 10h9M15 8l2 2-2 2M8 10l-6 6M2 12v4h4" fill="none" stroke="currentColor"/><circle cx="8" cy="10" r="2" fill="none" stroke="currentColor"/></symbol>
            <symbol id="s9" viewBox="0 0 18 18"><path d="M2 2l12 9M12 2L3 10" stroke="currentColor"/><circle cx="7" cy="6" r="2" fill="none" stroke="currentColor"/><use href="#cursor" x="11" y="8" width="6" height="9"/></symbol>
            <symbol id="s10" viewBox="0 0 18 18"><path d="M1.500 2.500h15v13h-15zM4.500 5.500h9v7h-9z" fill="none" stroke="currentColor"/><circle cx="9" cy="9" r="2" fill="none" stroke="currentColor"/></symbol>
            <symbol id="s11" viewBox="0 0 18 18"><path d="M2 1l3 5M5 1L2 6M7 1l2 2 2-2M9 3v3M13 1h4l-4 5h4M5 9l9 7M14 9l-9 7" stroke="currentColor" fill="none"/></symbol>
            <symbol id="s12" viewBox="0 0 18 18"><path d="M4 12l8-9M12 6l2 10M14 12l3 4M17 12l-3 4" stroke="currentColor" fill="none"/><circle cx="3" cy="12" r="2" fill="none" stroke="currentColor"/><circle cx="12" cy="3" r="2" fill="none" stroke="currentColor"/></symbol>
            <symbol id="s13" viewBox="0 0 18 18"><path d="M2 3h4v8l-2 3-2-3zM8 11l3 3 6-11" stroke="currentColor" fill="none"/></symbol>
        </defs>
    </svg>

    <header class="titlebar">
        <svg class="i17"><use href="#app"/></svg>
        <div class="quick">
            <button title="Save"><svg class="i16"><use href="#save"/></svg></button>
            <button title="Open"><svg class="i17"><use href="#open"/></svg></button>
            <i class="sep"></i>
            <button class="drop" title="New part"><svg class="i17"><use href="#qPart"/></svg><svg class="arr"><use href="#arrow"/></svg></button>
            <button class="drop" title="New assembly"><svg class="i17"><use href="#qAsm"/></svg><svg class="arr"><use href="#arrow"/></svg></button>
            <button class="drop" title="New drawing"><svg class="i17"><use href="#qDraw"/></svg><svg class="arr"><use href="#arrow"/></svg></button>
            <button class="drop" title="New NC"><svg class="i17"><use href="#qNc"/></svg><svg class="arr"><use href="#arrow"/></svg></button>
            <i class="sep"></i>
            <button title="Close all"><svg class="i17"><use href="#closeDocs"/></svg></button>
            <i class="sep"></i>
            <button class="drop" title="Undo"><svg class="i17"><use href="#undo"/></svg><svg class="arr"><use href="#arrow"/></svg></button>
            <button class="drop" title="Redo"><svg class="i17"><use href="#redo"/></svg><svg class="arr"><use href="#arrow"/></svg></button>
            <button title="Switch"><svg class="i17"><use href="#swap"/></svg></button>
            <i class="sep"></i>
            <button title="List"><svg class="i17"><use href="#winList"/></svg></button>
        </div>
        <nav class="menu">
            <a href="#">File</a><a href="#">Edit</a><a href="#">NC Edit</a><a href="#">View</a><a href="#">Wireframe</a><a href="#">Faces</a><a href="#">NC-Process</a><a href="#">NC Utilities</a><a href="#">Tools</a><a href="#">Analysis</a><a href="#">Catalog</a><a href="#">Window</a>
        </nav>
        <h1>Test : NC-Standard</h1>
    </header>

    <div class="ribbon">
        <div class="group g-cad">
            <button class="big off"><svg class="i28"><use href="#cad"/></svg>Switch to<br>CAD Mode</button>
        </div>
        <div class="group g-model">
            <div class="model">
                <select aria-label="Coordinate system"><option>MODEL</option></select>
                <button class="line"><svg class="i17"><use href="#toolAxis"/></svg>By NC Tool</button>
            </div>
        </div>
        <div class="group g-motion">
            <button class="big"><svg class="i26"><use href="#motion"/></svg>Toggle<br>Motio...</button>
            <div class="cells">
                <button class="on"><svg class="i28"><use href="#toolBulb"/></svg></button>
                <button><svg class="i26"><use href="#wireCube"/></svg></button>
                <button><svg class="i26"><use href="#motionOff"/></svg></button>
                <button class="on"><svg class="i28"><use href="#cubeBulb"/></svg></button>
            </div>
        </div>
        <div class="group g-lists">
            <div class="cells three">
                <button><svg class="i28"><use href="#listPale"/></svg></button>
                <button><svg class="i24"><use href="#help"/></svg></button>
                <button class="on"><svg class="i24"><use href="#winLayout"/></svg></button>
                <button class="on"><svg class="i26"><use href="#gantt"/></svg></button>
                <button><svg class="i24"><use href="#info"/></svg></button>
                <button><svg class="i26"><use href="#ncTable"/></svg></button>
            </div>
            <svg class="arr low"><use href="#arrow"/></svg>
            <div class="cells one ruled">
                <button><svg class="i17"><use href="#treeUp"/></svg></button>
                <button><svg class="i24"><use href="#treeDown"/></svg></button>
            </div>
            <button class="big on tab"><svg class="i28"><use href="#sets"/></svg>Sets Tab</button>
        </div>
        <div class="group g-offset">
            <button class="big"><svg class="i26"><use href="#offset"/></svg>Offset</button>
            <div class="cells one">
                <button><svg class="i28"><use href="#surfA"/></svg></button>
                <button><svg class="i28"><use href="#surfB"/></svg></button>
            </div>
        </div>
        <div class="group g-sketch">
            <button class="big"><svg class="i24"><use href="#sketch"/></svg>Sketcher</button>
            <button class="big"><svg class="i24"><use href="#curve"/></svg>Composite<br>Curve</button>
        </div>
        <div class="group g-ucs">
            <button class="big"><svg class="i26"><use href="#ucs"/></svg>UCS Copy<svg class="arr end"><use href="#arrow"/></svg></button>
        </div>
        <div class="group g-mfg">
            <button class="big"><svg class="i26"><use href="#mfg"/></svg>Manufactur...<br>Attributes</button>
            <div class="cells one ruled">
                <button><svg class="i26"><use href="#drill"/></svg></button>
                <button class="on"><svg class="i26"><use href="#drillBulb"/></svg></button>
            </div>
        </div>
        <div class="group g-dim">
            <div class="cells one">
                <button><svg class="i24"><use href="#dim"/></svg></button>
                <button class="letter">A</button>
            </div>
            <div class="stack">
                <svg class="i17"><use href="#note"/></svg>
                <svg class="i17"><use href="#dimPale"/></svg>
                <svg class="i17"><use href="#textPale"/></svg>
            </div>
        </div>
        <div class="group g-measure">
            <button class="big"><svg class="i26"><use href="#measure"/></svg>Measurement</button>
            <div class="cells">
                <button><svg class="i28"><use href="#rainbow"/></svg></button>
                <button><svg class="i32"><use href="#normal"/></svg></button>
                <button><svg class="i28"><use href="#pick"/></svg></button>
            </div>
        </div>
        <div class="group g-zoom">
            <div class="cells">
                <button><svg class="i28"><use href="#zoomWin"/></svg></button>
                <button><svg class="i28"><use href="#zoomBox"/></svg></button>
                <button><svg class="i28"><use href="#zoomPart"/></svg></button>
                <button><svg class="i28"><use href="#mouse"/></svg></button>
            </div>
        </div>
        <div class="group g-views">
            <div class="views">
                <svg class="i17"><use href="#cTop"/></svg><svg class="i17"><use href="#cBot"/></svg><svg class="i17"><use href="#cIso"/></svg>
                <svg class="i17"><use href="#cFront"/></svg><svg class="i17"><use href="#cBack"/></svg><i></i>
                <svg class="i17"><use href="#cLeft"/></svg><svg class="i17"><use href="#cRight"/></svg>
            </div>
        </div>
        <div class="group g-color">
            <div class="palette">
                <i class="red"></i><i class="yellow"></i><i class="blue"></i><i class="green"></i>
                <i class="cyan"></i><i class="magenta"></i><i class="white"></i><i class="black"></i>
                <hr>
                <i class="p1"></i><i class="p2"></i><i class="p3"></i><i class="p4"></i>
                <i class="p5"></i><i class="p6"></i><i class="p7"></i><i class="p8"></i>
            </div>
            <div class="current">
                <i class="blue"></i>
                <svg class="i18"><use href="#wheel"/></svg>
                <svg class="i17"><use href="#dropper"/></svg>
            </div>
            <div class="stack">
                <svg class="i16"><use href="#widths"/></svg>
                <svg class="i16"><use href="#styles"/></svg>
                <svg class="i17"><use href="#brush"/></svg>
            </div>
            <div class="stack"><svg class="i16"><use href="#lineCol"/></svg></div>
        </div>
    </div>

    <div class="work">
        <div class="guide">
            <div class="guide-tabs"><i></i><i class="sel"></i></div>
            <div class="guide-list">
                <div class="dots"></div>
                <button><svg class="i30"><use href="#load"/></svg>Load Model</button>
                <button><svg class="i30"><use href="#pocket"/></svg>Pocket<br>Manager</button>
                <button><svg class="i30"><use href="#tool"/></svg>Cutters</button>
                <button><svg class="i30"><use href="#setup"/></svg>NC Setup</button>
                <button><svg class="i30"><use href="#part"/></svg>Part</button>
                <button><svg class="i30"><use href="#stock"/></svg>Stock</button>
                <button><svg class="i30"><use href="#toolpath"/></svg>Toolpath</button>
                <button><svg class="i30"><use href="#proc"/></svg>Procedure</button>
                <button><svg class="i30"><use href="#run"/></svg>Execute</button>
                <button><svg class="i30"><use href="#gfilter"/></svg>Global Filter</button>
                <button><svg class="i30"><use href="#helm"/></svg>Navigator</button>
                <button class="off"><svg class="i30"><use href="#handPale"/></svg></button>
                <button><svg class="i30"><use href="#machine"/></svg>Machining<br>Simulation</button>
                <button class="off"><svg class="i30"><use href="#remain"/></svg>Remaining<br>Stock</button>
                <hr>
                <button><svg class="i30"><use href="#post"/></svg>Post Process</button>
                <button><svg class="i30"><use href="#report"/></svg>NC Report</button>
                <button class="sel"><svg class="i30"><use href="#job"/></svg>Job Manager</button>
            </div>
        </div>

        <div class="panel">
            <h2>NC Process Manager <svg class="tack"><use href="#tack"/></svg></h2>
            <div class="tree">
                <table>
                    <colgroup><col class="c-status"><col class="c-fold"><col class="c-name"><col class="c-s"><col class="c-s"><col class="c-s"><col class="c-m"><col class="c-m"><col class="c-comment"><col class="c-m"><col></colgroup>
                    <thead>
                        <tr><th colspan="2">Status</th><th>Detailed TP/Proc Name</th><th></th><th></th><th>Nu</th><th>U</th><th>S</th><th>Comment</th><th>C</th><th>F</th></tr>
                    </thead>
                    <tbody>
                        <tr class="setup"><td><svg class="i14"><use href="#okList"/></svg></td><td colspan="2"><svg class="box"><use href="#minus"/></svg>NC_Setup (2 P)</td><td></td><td></td><td></td><td></td><td></td><td>No Text</td><td></td><td></td></tr>
                        <tr><td><svg class="i14"><use href="#ok"/></svg></td><td colspan="2"><i class="box"></i>Target Part_2</td><td></td><td></td><td></td><td></td><td></td><td>No Text</td><td></td><td></td></tr>
                        <tr><td><svg class="i14"><use href="#ok"/></svg></td><td colspan="2"><i class="box"></i>Stock By Bounding Box_3</td><td></td><td></td><td></td><td></td><td><svg class="i14"><use href="#bulbBox"/></svg></td><td>No Text</td><td><i class="swatch"></i></td><td></td></tr>
                        <tr class="picked"><td><svg class="i14"><use href="#okGrey"/></svg></td><td colspan="2"><svg class="box"><use href="#plus"/></svg>123 (3X) (1 P)</td><td><svg class="i16"><use href="#bulbOff"/></svg></td><td></td><td>3</td><td></td><td></td><td>No Text</td><td></td><td></td></tr>
                    </tbody>
                </table>
                <div class="hbar"><span>◂</span><i>|||</i><span>▸</span></div>
            </div>
            <div class="select-box">
                <div class="pair">
                    <span>Main Selection</span>
                    <button disabled><svg class="i24"><use href="#vmill"/></svg>Volume Milling<svg class="arr"><use href="#arrow"/></svg></button>
                </div>
                <div class="pair wide">
                    <span>Subselection</span>
                    <button disabled><svg class="i22"><use href="#spiral"/></svg>Rough Spiral<svg class="arr"><use href="#arrow"/></svg></button>
                </div>
                <hr>
            </div>
            <div class="params">
                <table>
                    <colgroup><col class="c-param"><col></colgroup>
                    <thead><tr><th>Parameter</th><th>Value</th></tr></thead>
                    <tbody>
                        <tr><td><i class="pin"></i><svg class="box"><use href="#minus"/></svg>Motion Parameters</td><td></td></tr>
                        <tr class="sub"><td><svg class="pin"><use href="#pin"/></svg><svg class="box"><use href="#plus"/></svg>Clearance &amp; UCS</td><td></td></tr>
                        <tr class="sub"><td><svg class="pin"><use href="#pin"/></svg><svg class="box"><use href="#plus"/></svg>Entry &amp; End Points</td><td class="dim">Optimized</td></tr>
                        <tr class="sub focus"><td><svg class="pin"><use href="#pin"/></svg><span><svg class="box"><use href="#plus"/></svg>Boundary Settings</span></td><td></td></tr>
                        <tr class="sub"><td><svg class="pin"><use href="#pin"/></svg><svg class="box"><use href="#plus"/></svg>Tolerance &amp; Surf. Offset</td><td>Advanced</td></tr>
                        <tr class="sub"><td><svg class="pin"><use href="#pin"/></svg><svg class="box"><use href="#plus"/></svg>Electrode Machining</td><td>No</td></tr>
                        <tr class="sub"><td><svg class="pin"><use href="#pin"/></svg><svg class="box"><use href="#plus"/></svg>Tool Trajectory</td><td>Advanced</td></tr>
                        <tr class="sub"><td><svg class="pin"><use href="#pin"/></svg><svg class="box"><use href="#plus"/></svg>Z Limits</td><td>Bottom Only</td></tr>
                        <tr class="sub"><td><svg class="pin"><use href="#pin"/></svg><svg class="box"><use href="#plus"/></svg>Machine Between Layers</td><td>Basic</td></tr>
                        <tr class="sub"><td><svg class="pin"><use href="#pin"/></svg><svg class="box"><use href="#plus"/></svg>High Speed Machining</td><td>Basic</td></tr>
                        <tr class="sub"><td><svg class="pin"><use href="#pin"/></svg><svg class="box"><use href="#plus"/></svg>Clean Between Passes</td><td>Basic</td></tr>
                        <tr class="sub"><td><svg class="pin"><use href="#pin"/></svg><svg class="box"><use href="#plus"/></svg>Shank &amp; Holder</td><td class="dim">None</td></tr>
                        <tr class="sub"><td><svg class="pin"><use href="#pin"/></svg><svg class="box"><use href="#plus"/></svg>Stock</td><td>Advanced</td></tr>
                        <tr class="sub"><td><svg class="pin"><use href="#pin"/></svg><svg class="box"><use href="#plus"/></svg><label for="aux">Create Auxiliary Contours</label></td><td><input type="checkbox" id="aux"></td></tr>
                        <tr><td><svg class="pin"><use href="#pin"/></svg><svg class="box"><use href="#plus"/></svg>Cutters &amp; Holders</td><td class="fill"><button>D50R6</button></td></tr>
                        <tr><td><svg class="pin"><use href="#pin"/></svg><svg class="box"><use href="#plus"/></svg>Machine Parameters</td><td></td></tr>
                        <tr><td><i class="pin"></i><svg class="box"><use href="#plus"/></svg>Geometry</td><td></td></tr>
                    </tbody>
                </table>
                <div class="vbar"><span>▴</span><i>≡</i><span>▾</span></div>
            </div>
            <div class="tabs"><button>Features</button><button class="sel">NC Process Manager</button></div>
            <div class="tabs dock"><button>NC Execution Monitor</button><button>Output</button></div>
        </div>

        <div class="stage">
            <div class="view">
                <svg class="scene" viewBox="451 108 1188 888" preserveAspectRatio="xMinYMin slice">
                    <defs>
                        <linearGradient id="boss" x1="1250" x2="1335" y1="0" y2="0" gradientUnits="userSpaceOnUse"><stop offset="0" stop-color="#00b400"/><stop offset=".3" stop-color="#22f022"/><stop offset=".6" stop-color="#00b400"/><stop offset="1" stop-color="#008c00"/></linearGradient>
                        <linearGradient id="bossTop" x1="1245" x2="1335" y1="0" y2="0" gradientUnits="userSpaceOnUse"><stop offset="0" stop-color="#00a800"/><stop offset=".25" stop-color="#c8ffc8"/><stop offset=".45" stop-color="#30e830"/><stop offset=".8" stop-color="#009c00"/><stop offset="1" stop-color="#00a000"/></linearGradient>
                        <linearGradient id="wall" x1="0" x2="1" y1="0" y2="0"><stop offset="0" stop-color="#000090"/><stop offset=".12" stop-color="#00006c"/><stop offset=".35" stop-color="#0000a8"/><stop offset=".62" stop-color="#2020e0"/><stop offset=".85" stop-color="#0000a0"/><stop offset="1" stop-color="#000090"/></linearGradient>
                        <linearGradient id="rim" x1="0" x2="1" y1="0" y2="0"><stop offset="0" stop-color="#00009a"/><stop offset=".4" stop-color="#0000b0"/><stop offset=".62" stop-color="#b0a8ff"/><stop offset=".8" stop-color="#1010d0"/><stop offset="1" stop-color="#00009a"/></linearGradient>
                        <linearGradient id="fil" x1="1355" y1="650" x2="1385" y2="672" gradientUnits="userSpaceOnUse"><stop offset="0" stop-color="#00a000"/><stop offset="1" stop-color="#007c00"/></linearGradient>
                        <linearGradient id="corner" x1="0" x2="1" y1="0" y2="0"><stop offset="0" stop-color="#bb7c54"/><stop offset="1" stop-color="#744a32"/></linearGradient>
                    </defs>
                    <g stroke="#000" stroke-width="1.200" stroke-linejoin="round">
                        <path d="M802 709L1369 919L1371 879L1224 815L1217 777Q1215 766 1206 762L1074 709L900 640z" fill="#bb7c54"/>
                        <path d="M1603 592L1601 637L1567 680L1387 915L1388 875L1511 709z" fill="#744a32"/>
                        <path d="M1371 879L1369 919Q1377 924 1387 915L1388 875z" fill="url(#corner)"/>
                        <path d="M1000 385Q1050 388 1101 394Q1280 420 1448 523L1506 544L1597 580Q1605 584 1602 593L1511 709L1388 875Q1382 882 1371 879L1224 815L1217 777Q1215 766 1206 762L1000 680z" fill="#009a00"/>
                        <path d="M1000 400L1101 439L1383 545Q1414 562 1414 583Q1414 595 1408 603L1326 709L1320 717Q1310 732 1290 729Q1275 727 1245 712L1206 762L1074 709L1000 680z" fill="#00009c"/>
                        <path d="M1101 437L1240 486L1384 542" fill="none" stroke="#008200" stroke-width="2"/>
                        <path d="M1383 545Q1384 541 1388 542" fill="none"/>
                        <path d="M1408 603L1320 717Q1330 720 1332 730L1371 680L1419 617Q1417 608 1408 603z" fill="url(#fil)"/>
                        <path d="M1419 617L1332 730L1337 759L1396 680L1427 641z" fill="#007c00"/>
                        <path d="M1416 565Q1426 578 1426 590Q1427 605 1419 617M1427 593L1435 602Q1441 622 1429 642L1401 680L1339 761" fill="none"/>
                        <path d="M1435 602Q1437 624 1427 641" fill="none"/>
                        <path d="M1206 762L1245 712L1247 737L1218 777Q1214 765 1206 762z" fill="#008c00"/>
                        <path d="M1218 777L1247 737L1250 775L1224 813z" fill="#007800"/>
                        <path d="M1226 816L1255 777" fill="none"/>
                        <path d="M1245 712Q1275 729 1290 729Q1312 730 1320 717Q1330 722 1332 730Q1316 748 1290 748Q1262 746 1247 737z" fill="url(#bossTop)"/>
                        <path d="M1247 737Q1262 746 1290 748Q1316 748 1332 730L1337 759Q1318 779 1290 779Q1262 779 1250 773z" fill="url(#boss)"/>
                        <path d="M1250 775Q1265 783 1290 783Q1320 782 1340 761M1269 723Q1260 735 1261 742L1256 776M1245 712Q1252 722 1252 738L1254 775" fill="none"/>
                        <path d="M1448 523L1415 562M1506 544L1460 598L1435 602M1460 598L1560 643M1340 761L1437 808" fill="none"/>
                        <ellipse cx="1180" cy="534" rx="60" ry="41" fill="url(#rim)"/>
                        <ellipse cx="1180" cy="537" rx="54" ry="37" fill="url(#wall)"/>
                        <ellipse cx="1180" cy="544" rx="52" ry="30" fill="#00009c"/>
                        <ellipse cx="1272" cy="619" rx="48" ry="34" fill="url(#rim)"/>
                        <ellipse cx="1272" cy="622" rx="43" ry="31" fill="url(#wall)"/>
                        <ellipse cx="1272" cy="628" rx="42" ry="25" fill="#00009c"/>
                        <path d="M1090 594L1153 617Q1163 620 1163 629Q1158 642 1146 642Q1120 638 1090 622z" fill="#000088"/>
                        <path d="M1090 602L1153 623L1152 639L1090 616z" fill="#1414d8"/>
                        <path d="M1090 595L1153 618L1153 623L1090 602z" fill="#8c84f4"/>
                    </g>
                    <g fill="none" stroke="#0000ff" stroke-width="1.200">
                        <path d="M1154 611V592M1151 598l3-7 3 7zM1154 611l12-15M1160 600l6-5-2 8M1154 613l20 6"/>
                    </g>
                    <g class="ucs-text"><text x="1152" y="585" fill="#0000ff">Z</text><text x="1168" y="590" fill="#0000ff">Y</text><text x="1184" y="626" fill="#0000ff">X</text><text x="1152" y="625" fill="#f00">MODEL</text></g>
                    <g class="triad">
                        <path d="M556 918L557 896" stroke="#1428d8" stroke-width="5"/><path d="M552 896l5-12 5 12z" fill="#1428d8"/>
                        <path d="M558 917L571 900" stroke="#08960c" stroke-width="5"/><path d="M566 896l13-5-4 13z" fill="#08960c"/>
                        <path d="M559 922L588 932" stroke="#f00000" stroke-width="5"/><path d="M589 928l11 10-14 0z" fill="#e00000"/>
                        <circle cx="556" cy="921" r="5" fill="#fff01c"/>
                        <text x="552" y="880" fill="#2a3ce0">Z</text><text x="579" y="888" fill="#2aa82a">Y</text><text x="606" y="946" fill="#f02020">X</text>
                    </g>
                </svg>

                <div class="float sel-bar">
                    <svg class="i18"><use href="#tSelX"/></svg><svg class="i18"><use href="#tBoxPale"/></svg><i class="sep"></i>
                    <svg class="i18"><use href="#tGreen"/></svg><svg class="arr"><use href="#arrow"/></svg>
                    <svg class="i18"><use href="#tDash"/></svg><svg class="arr"><use href="#arrow"/></svg>
                    <svg class="i18"><use href="#tDrop"/></svg><svg class="arr"><use href="#arrow"/></svg>
                </div>
                <div class="float show-bar">
                    <svg class="i18"><use href="#bulbOff"/></svg><svg class="i18"><use href="#bulbOn"/></svg><svg class="i18"><use href="#tSwap"/></svg><svg class="i18"><use href="#tBulbPale"/></svg><svg class="i18"><use href="#tLeft"/></svg><svg class="i18"><use href="#tRight"/></svg><i class="sep"></i>
                    <svg class="i18"><use href="#tCube"/></svg><svg class="arr"><use href="#arrow"/></svg>
                    <svg class="i18"><use href="#tBoxSel"/></svg><svg class="arr"><use href="#arrow"/></svg>
                </div>
                <div class="float filter-bar">
                    <svg class="i18"><use href="#fUndo"/></svg><svg class="i18 framed"><use href="#f0"/></svg><i class="sep"></i>
                    <svg class="i18"><use href="#fAxis"/></svg><i class="sep"></i>
                    <svg class="i18"><use href="#f1"/></svg><svg class="i18"><use href="#f2"/></svg><svg class="i18"><use href="#f3"/></svg><svg class="i18"><use href="#f4"/></svg><svg class="i18"><use href="#f5"/></svg><svg class="i18"><use href="#f6"/></svg><svg class="i18"><use href="#f7"/></svg><i class="sep"></i>
                    <svg class="i18"><use href="#f8"/></svg><svg class="i18"><use href="#f9"/></svg><i class="sep"></i>
                    <svg class="pickf"><use href="#f10"/></svg>
                    <svg class="i18"><use href="#s1"/></svg><svg class="i18"><use href="#s2"/></svg><svg class="i18"><use href="#s3"/></svg><svg class="i18"><use href="#s4"/></svg><svg class="i18"><use href="#s5"/></svg><svg class="i18"><use href="#s6"/></svg><svg class="i18"><use href="#s7"/></svg><svg class="i18"><use href="#s8"/></svg><svg class="i18"><use href="#s9"/></svg><svg class="i18"><use href="#s10"/></svg><svg class="i18"><use href="#s11"/></svg><svg class="i18"><use href="#s12"/></svg><svg class="i18"><use href="#s13"/></svg>
                </div>

                <div class="dialog" role="dialog" aria-labelledby="dlgTitle">
                    <div class="dialog-title">
                        <span id="dlgTitle">VERICUT Interface</span>
                        <button class="close" aria-label="Close"><svg viewBox="0 0 12 10"><path d="M1 1h3l2 2 2-2h3L8 5l3 4H8L6 7 4 9H1l3-4z" fill="#fff" stroke="#5a3a44"/></svg></button>
                    </div>
                    <form class="dialog-body">
                        <div class="box1">
                            <label for="prog">Machine Program File:</label>
                            <div class="field"><input type="text" id="prog" value="Z:\123.nc"><button type="button">...</button></div>
                            <label for="proj">VERICUT Project:</label>
                            <div class="field"><input type="text" id="proj" value="Z:\Fidia_D318\d318-bc.vcproject"><button type="button">...</button></div>
                        </div>
                        <div class="box1 subs">
                            <div class="check"><input type="checkbox" id="separate"><label for="separate">Subroutines as Separated Files</label></div>
                            <label for="subf">Subroutine Files (Select ALL Subroutine Files):</label>
                            <div class="field"><input type="text" id="subf" disabled><button type="button" disabled>...</button></div>
                        </div>
                        <div class="box1 install">
                            <label for="inst">VERICUT Installation Folder (For Example: "C:\Program Files\cgtech\7.2"):</label>
                            <div class="field"><input type="text" id="inst" value="G:\Program Files\CGTech\VERICUT 7.4.2"><button type="button">...</button></div>
                        </div>
                        <div class="buttons"><button type="button" class="ok">OK</button><button type="button">Cancel</button></div>
                    </form>
                </div>
            </div>
            <div class="status">
                <span class="cell">TP_123</span><span class="cell last">C</span>
                <span class="mark">三维网www.3dportal.cn</span>
            </div>
        </div>
    </div>
</body>
</html>
```
FILE: styles.css
```css
* {
    box-sizing: border-box;
}

body {
    margin: 0;
    height: 100vh;
    display: flex;
    flex-direction: column;
    overflow: hidden;
    background-color: #f0f0f0;
    font-family: "Open Sans", "Noto Sans", sans-serif;
    font-size: 11px;
    line-height: 13px;
    color: #333;
}

button {
    font: inherit;
    color: inherit;
    background: none;
    border: none;
    padding: 0;
}

svg {
    display: block;
    flex: none;
}

.defs {
    position: absolute;
    width: 0;
    height: 0;
}

.i14 { width: 14px; height: 14px; }
.i16 { width: 16px; height: 16px; }
.i17 { width: 17px; height: 17px; }
.i18 { width: 18px; height: 18px; }
.i22 { width: 22px; height: 22px; }
.i24 { width: 24px; height: 24px; }
.i26 { width: 26px; height: 26px; }
.i28 { width: 28px; height: 28px; }
.i30 { width: 30px; height: 30px; }
.i32 { width: 32px; height: 28px; }
.arr { width: 6px; height: 4px; }

/* title bar */
.titlebar {
    flex: none;
    height: 28px;
    padding-left: 6px;
    display: flex;
    align-items: center;
    background-color: #82a0b7;
    border-top: 1px solid #9c9696;
    color: #fff;
}

.quick {
    display: flex;
    align-items: center;
    justify-content: space-between;
    width: 291px;
    height: 24px;
    margin-left: 10px;
    padding: 0 4px;
    background-color: #b9cad9;
    border: 1px solid #6c8498;
    border-radius: 2px;
}

.drop {
    display: flex;
    align-items: center;
    gap: 4px;
}

.quick .sep {
    width: 1px;
    height: 18px;
    background-color: #98a8b6;
}

.menu {
    display: flex;
    gap: 15px;
    margin-left: 15px;
}

.menu a {
    color: #fff;
    text-decoration: none;
}

.titlebar h1 {
    margin: 0 auto;
    padding-left: 132px;
    font-size: 11px;
    font-weight: bold;
}

/* ribbon */
.ribbon {
    flex: none;
    display: flex;
    gap: 2px;
    height: 79px;
    padding: 1px 5px 5px 8px;
    background-color: #f2f2f2;
}

.group {
    position: relative;
    display: flex;
    align-items: flex-start;
    flex: none;
    padding: 2px 3px 0 14px;
    background-color: #e4eaf0;
    border: 1px solid #d2d6da;
}

.group::before, .dots {
    background-image: radial-gradient(circle, #90aec4 1px, transparent 2px);
    background-size: 4px 4px;
}

.group::before {
    content: "";
    position: absolute;
    left: 3px;
    top: 2px;
    width: 8px;
    height: 16px;
}

.g-cad { width: 80px; padding-left: 8px; }
.g-model { width: 148px; }
.g-motion { width: 144px; padding: 2px 7px 0 12px; }
.g-lists { width: 229px; padding-left: 12px; }
.g-offset { width: 95px; padding: 2px 8px 0 12px; }
.g-sketch { width: 129px; padding: 2px 9px 0 8px; }
.g-ucs { width: 73px; padding-left: 8px; }
.g-mfg { width: 133px; padding: 2px 7px 0 10px; }
.g-dim { width: 78px; padding-left: 12px; }
.g-measure { width: 170px; padding: 2px 6px 0 10px; }
.g-zoom { width: 94px; padding-left: 11px; }
.g-views { width: 83px; }
.g-color { flex: 1; padding-left: 12px; }

.big {
    flex: 1;
    display: flex;
    flex-direction: column;
    align-items: center;
    height: 69px;
    white-space: nowrap;
    border: 1px solid transparent;
}

.big > svg:first-child {
    height: 28px;
    margin: 2px 0 3px;
}

.big .end {
    margin-top: 14px;
}

.big.off {
    color: #8c9298;
}

.big.tab {
    height: 48px;
    flex: 0 0 46px;
    margin-left: 2px;
    border-color: #84b8d8;
}

.on {
    background-color: #c4e4fc;
    border: 1px solid #84b8d8;
}

.cells {
    display: grid;
    grid-template-columns: 36px 36px;
    grid-auto-rows: 34px;
    gap: 1px 2px;
}

.cells.three { grid-template-columns: 36px 36px 36px; gap: 1px; }
.cells.one { grid-template-columns: 36px; }

.cells button {
    display: flex;
    align-items: center;
    justify-content: center;
}

.letter {
    font: italic bold 24px "Liberation Serif", serif;
    color: #000;
}

.ruled {
    border-left: 1px solid #c8d0d6;
    border-right: 1px solid #c8d0d6;
}

.g-mfg .ruled {
    border-right: none;
    padding-left: 1px;
}

.arr.low {
    margin: 50px 4px 0 4px;
}

.model {
    display: flex;
    flex-direction: column;
    gap: 10px;
    padding: 5px 0 0 2px;
}

.model select {
    width: 117px;
    height: 20px;
    padding: 0 3px;
    font: inherit;
    color: #222;
    border: 1px solid #b8bcc0;
    border-radius: 0;
    appearance: none;
    background-color: #fff;
    background-image: linear-gradient(45deg, transparent 50%, #444 50%), linear-gradient(-45deg, transparent 50%, #444 50%), linear-gradient(#b8bcc0, #b8bcc0), linear-gradient(#e9eef3, #e9eef3);
    background-size: 4px 4px, 4px 4px, 1px 20px, 14px 20px;
    background-position: right 7px top 6px, right 3px top 6px, right 14px center, right;
    background-repeat: no-repeat;
}

.line {
    display: flex;
    align-items: center;
    gap: 5px;
}

.stack {
    display: flex;
    flex-direction: column;
    gap: 6px;
    margin-left: 2px;
}

.views {
    display: grid;
    grid-template-columns: 17px 17px 17px;
    gap: 7px 4px;
}

.palette {
    display: grid;
    grid-template-columns: repeat(4, 13px);
    grid-template-rows: 13px 13px 6px 13px 13px;
    gap: 2px;
    padding-top: 3px;
}

.palette hr {
    grid-column: 1 / -1;
    height: 1px;
    width: 100%;
    margin: auto 0;
    border: none;
    background-color: #c4c8cc;
}

.red { background-color: #f00; }
.yellow { background-color: #ff0; }
.blue { background-color: #00f; }
.green { background-color: #0f0; }
.cyan { background-color: #0ff; }
.magenta { background-color: #f0f; }
.white { background-color: #fff; }
.black { background-color: #000; }
.p1 { background-color: #f0f0f0; }
.p2 { background-color: #ffc8cc; }
.p3 { background-color: #ffe4c0; }
.p4 { background-color: #ffffc8; }
.p5 { background-color: #e0ecd0; }
.p6 { background-color: #d0ffe4; }
.p7 { background-color: #b0f0f8; }
.p8 { background-color: #b8d0ff; }

.current {
    display: flex;
    flex-direction: column;
    gap: 1px;
    margin-left: 3px;
    padding-top: 1px;
}

.current i {
    width: 18px;
    height: 19px;
    border: 1px solid #ccc;
}

.g-color .stack {
    gap: 8px;
    margin-left: 5px;
}

/* work area */
.work {
    flex: 1;
    display: flex;
    min-height: 0;
}

.guide {
    flex: none;
    width: 75px;
    margin: 0 5px 12px 0;
    background-color: #e9eef4;
    border-left: 1px solid #999;
    border-top: 1px solid #a8a8a8;
}

.guide-tabs {
    display: flex;
    gap: 3px;
    height: 6px;
    padding-left: 4px;
}

.guide-tabs i {
    width: 7px;
    height: 5px;
    border: 1px solid #8cb0cc;
    background-color: #fff;
}

.guide-tabs .sel {
    width: 11px;
    background-color: #b4d4f4;
}

.guide-list {
    display: flex;
    flex-direction: column;
    margin-left: 1px;
    padding-bottom: 15px;
    background-color: #e4eaf0;
    border: 1px solid #d0d4d8;
    border-right: none;
}

.dots {
    align-self: flex-end;
    width: 16px;
    height: 8px;
    margin: 1px 1px 1px 0;
}

.guide button {
    display: flex;
    flex-direction: column;
    align-items: center;
    margin-left: 2px;
    padding: 3px 0 2px;
    white-space: nowrap;
}

.guide .i30 {
    padding: 1px;
}

.guide .sel {
    background-color: #c4e4fc;
    outline: 1px solid #84b8d8;
    outline-offset: -1px;
}

.guide .off {
    color: #8c9298;
}

.guide hr {
    width: 69px;
    height: 2px;
    margin: 0 0 0 3px;
    border: none;
    background-color: #c8ccd0;
}

.panel {
    flex: none;
    display: flex;
    flex-direction: column;
    width: 366px;
    margin-bottom: 12px;
}

.panel h2 {
    display: flex;
    justify-content: space-between;
    align-items: center;
    height: 21px;
    margin: 0 0 2px;
    padding: 0 4px;
    font-size: 12px;
    font-weight: normal;
    color: #444;
    background-color: #bccad8;
    border: 1px solid #a8a8a8;
}

.tack {
    width: 8px;
    height: 10px;
}

.tree, .params {
    border: 2px solid #6c6c6c;
    box-shadow: 0 0 0 1px #fff;
    margin: 0 3px;
    background-color: #fff;
    font-family: "Liberation Sans", Arial, sans-serif;
}

.tree {
    height: 224px;
    display: flex;
    flex-direction: column;
    overflow: hidden;
    font-size: 12px;
    color: #000;
}

.panel table {
    width: 100%;
    table-layout: fixed;
    border-collapse: collapse;
}

.c-status { width: 43px; }
.c-fold { width: 17px; }
.c-name { width: 141px; }
.c-s { width: 12px; }
.c-m { width: 16px; }
.c-comment { width: 61px; }
.c-param { width: 225px; }

.panel th {
    height: 15px;
    padding: 0;
    font-weight: normal;
    overflow: hidden;
    white-space: nowrap;
}

.tree th {
    color: #fff;
    background-color: #ff8022;
    border: solid #8a6040;
    border-width: 0 1px 1px 0;
}

.tree td {
    height: 18px;
    padding: 0;
    white-space: nowrap;
}

.tree td:nth-child(8) {
    padding-left: 2px;
}

.tree td:first-child svg {
    margin-left: 19px;
}

.box {
    display: inline-block;
    width: 11px;
    height: 11px;
    margin: 0 6px 0 1px;
    vertical-align: -1px;
}

.tree .setup td:nth-child(n + 2) {
    font-weight: bold;
    border-bottom: 2px solid #000;
}

.tree .picked td:nth-child(n + 2) {
    background-color: #a6ccee;
    border-top: 1px solid #90b8dc;
    border-bottom: 1px solid #0a2c70;
}

.swatch {
    display: block;
    width: 13px;
    height: 14px;
    background-color: #00f;
    border: 1px solid #88a;
}

.hbar {
    display: flex;
    justify-content: space-between;
    align-items: center;
    height: 16px;
    margin: auto 0 4px;
    padding: 0 6px;
    background-color: #f0f0f0;
    color: #333;
}

.hbar i, .vbar i {
    border: 1px solid #999;
    border-radius: 2px;
    background: linear-gradient(#f4f4f4, #d0d0d0);
    text-align: center;
    font-style: normal;
}

.hbar i {
    flex: none;
    width: 236px;
    height: 15px;
    margin: 0 auto 0 6px;
    font-size: 9px;
    line-height: 12px;
}

.select-box {
    display: flex;
    flex-wrap: wrap;
    align-content: flex-start;
    height: 99px;
    margin: 7px 2px 0 0;
    padding: 10px 6px 0 7px;
    border-top: 1px solid #000;
    border-right: 2px solid #6c6c6c;
    border-bottom: 2px solid #6c6c6c;
    box-shadow: inset 0 4px 0 #f0f0f0, inset 2px 5px 0 #fff;
    font-family: "Liberation Sans", Arial, sans-serif;
    color: #a0a0a0;
}

.pair {
    width: 123px;
}

.pair.wide {
    width: 160px;
}

.pair button {
    display: flex;
    align-items: center;
    width: 100%;
    height: 24px;
    margin-top: 4px;
    color: #606060;
}

.pair button .arr {
    margin-left: auto;
    margin-right: 3px;
}

.pair span {
    padding-left: 2px;
}

.wide span {
    padding-left: 1px;
}

.wide button {
    gap: 2px;
}

.select-box hr {
    width: 324px;
    margin: 10px 0 0;
    border: none;
    border-top: 1px solid #a0a0a0;
}

.params {
    flex: 1;
    display: flex;
    align-items: flex-start;
    min-height: 0;
    overflow: hidden;
    margin-top: 0;
    background-color: #f0f0f0;
    font-size: 13px;
}

.params table {
    width: auto;
    flex: 1;
    background-color: #fff;
    border-bottom: 1px solid #666;
}

.params th {
    height: 17px;
    color: #777;
    background-color: #bcc6d6;
    border-right: 1px solid #777;
}

.params th:last-child {
    border-right: none;
}

.params td {
    height: 19px;
    padding: 0 0 0 2px;
    line-height: 16px;
    white-space: nowrap;
    border: solid #aaa;
    border-width: 0 0 1px;
    color: #000;
}

.params tr:last-child td {
    border-bottom: none;
}

.params td:first-child {
    padding-left: 1px;
    font-weight: bold;
    color: #999;
    border-right: 1px solid #aaa;
}

.params .sub td:first-child {
    padding-left: 25px;
}

.params td.dim {
    color: #777;
}

.params td.fill {
    padding: 0;
}

.fill button {
    display: block;
    width: 102px;
    height: 18px;
    background-color: #f0f0f0;
    border: solid #777;
    border-width: 0 2px 2px 0;
}

.params .pin {
    display: inline-block;
    width: 13px;
    height: 15px;
    margin-right: 3px;
    vertical-align: -3px;
}

.params .box {
    margin-right: 5px;
    vertical-align: -2px;
}

.focus span {
    display: inline-block;
    width: 185px;
    margin-left: -2px;
    padding-left: 2px;
    outline: 1px solid #666;
}

.params input {
    display: block;
    width: 12px;
    height: 12px;
    margin: 0 1px;
    appearance: none;
    border: 2px solid #777;
    border-width: 2px 0 0 2px;
}

.vbar {
    flex: none;
    align-self: stretch;
    display: flex;
    flex-direction: column;
    align-items: center;
    width: 17px;
    padding-right: 2px;
    line-height: 16px;
    color: #444;
}

.vbar i {
    flex: 1;
    width: 15px;
    display: flex;
    align-items: center;
    justify-content: center;
    background: linear-gradient(90deg, #f4f4f4, #c8c8c8);
}

.tabs {
    display: flex;
    height: 24px;
    margin: 1px 0 0 2px;
    color: #000;
}

.tabs button {
    height: 22px;
    padding: 0 4px 0 5px;
    background: linear-gradient(#dcdcdc, #f4f4f4);
    border: solid #888;
    border-width: 0 1px 1px;
}

.tabs .sel {
    height: 24px;
    padding: 0 10px 0 5px;
    background: #fff;
    border-left-width: 0;
}

.tabs.dock {
    gap: 12px;
    height: 21px;
    margin: 1px 0 0;
}

.dock button {
    height: 22px;
    padding: 0 10px 0 5px;
    font-weight: bold;
    background: #fff;
    border: 1px solid #888;
    border-bottom: none;
}

/* model view */
.stage {
    flex: 1;
    display: flex;
    flex-direction: column;
    min-width: 0;
    margin-left: 3px;
    border-left: 2px solid #777;
}

.view {
    position: relative;
    flex: 1;
    min-height: 0;
    overflow: hidden;
    background-color: #e4e4e4;
    border-top: 1px solid #777;
}

.scene {
    width: 100%;
    height: 100%;
}

.ucs-text {
    font: 10px "Liberation Mono", monospace;
}

.triad {
    font: 15px "Liberation Sans", Arial, sans-serif;
}

.float {
    position: absolute;
    top: 11px;
    display: flex;
    align-items: center;
    height: 25px;
    gap: 3px;
    padding: 0 4px;
    background-color: #e4eaf0;
    border: 1px solid #d4d8dc;
    border-radius: 2px;
    color: #000;
}

.float .sep {
    width: 1px;
    height: 18px;
    margin: 0 -1px;
    background-color: #b0b8c0;
}

.sel-bar { left: 218px; width: 139px; justify-content: space-between; }
.show-bar { left: 397px; width: 192px; padding-left: 3px; justify-content: space-between; }
.sel-bar .sep, .show-bar .sep { margin: 0 -2px; }
.filter-bar { left: 632px; right: 0; color: #a8b0b6; overflow: hidden; padding: 0 0 0 2px; border-right: none; }

.framed {
    outline: 1px solid #84b8d8;
}

.pickf {
    width: 24px;
    height: 18px;
    background-color: #a4ccff;
    color: #7890b8;
}

/* dialog */
.dialog {
    position: absolute;
    left: 160px;
    top: 220px;
    width: 490px;
    color: #111;
    background: linear-gradient(#9cb6d2, #b9d1ea 30px, #b9d1ea);
    border: 1px solid #111;
    border-radius: 6px 6px 0 0;
    box-shadow: inset -1px -1px 0 #40c0d8, inset 1px 1px 0 #e4f0fa;
    padding: 0 7px 7px;
}

.dialog-title {
    display: flex;
    align-items: center;
    justify-content: space-between;
    height: 29px;
    padding: 6px 2px 0 4px;
}

.close {
    width: 31px;
    height: 17px;
    margin-bottom: 1px;
    background: linear-gradient(#e8a498 45%, #c03c28 50%, #d87058);
    border: 1px solid #5c2424;
    border-radius: 2px;
}

.close svg {
    width: 12px;
    height: 10px;
    margin: 0 auto;
}

.dialog-body {
    padding: 11px 11px 12px;
    background-color: #f0f0f0;
    font-size: 10px;
    line-height: 13px;
}

.box1 {
    display: flex;
    flex-direction: column;
    gap: 5px;
    padding: 8px 23px 10px 14px;
    margin-bottom: 8px;
    border: 1px solid #d4dce2;
    border-radius: 3px;
    box-shadow: inset 0 0 0 1px #fff;
}

.box1 .field + label {
    margin-top: 4px;
}

.box1.subs {
    padding-top: 6px;
    padding-bottom: 6px;
}

.box1.install {
    padding-top: 14px;
    padding-bottom: 12px;
}

.field {
    display: flex;
    height: 23px;
    padding: 1px;
    background-color: #fff;
    border: 1px solid #abadb3;
}

.field input {
    flex: 1;
    min-width: 0;
    padding: 0 2px;
    border: none;
    background: none;
    font: inherit;
    font-size: 12px;
    color: #000;
}

.field:has(input:disabled) {
    background-color: #f0f0f0;
}

.field button, .buttons button {
    background: linear-gradient(#f2f2f2 50%, #dcdcdc 52%, #cfcfcf);
    border: 1px solid #707070;
    border-radius: 3px;
    box-shadow: inset 0 0 0 1px #fcfcfc;
}

.field button {
    width: 18px;
    height: 19px;
    font-weight: bold;
}

.field button:disabled {
    background: #f4f4f4;
    border-color: #aaa;
    color: #888;
}

.check {
    display: flex;
    align-items: center;
    gap: 4px;
    margin-bottom: 5px;
}

.check input {
    width: 13px;
    height: 13px;
    margin: 0;
    appearance: none;
    border: 1px solid #8e8f8f;
    background: linear-gradient(135deg, #c8ccd0, #f8f8f8);
    box-shadow: inset 0 0 0 2px #f4f4f4;
}

.buttons {
    display: flex;
    justify-content: flex-end;
    gap: 8px;
    margin-top: 24px;
}

.buttons button {
    width: 73px;
    height: 21px;
    font-size: 11px;
}

.buttons .ok {
    background: linear-gradient(#e8f6fd 50%, #c4e5f6 52%, #b4dcf0);
    border-color: #3c7fb1;
    box-shadow: inset 0 0 0 2px #48d0f8;
}

/* status strip */
.status {
    position: relative;
    flex: none;
    display: flex;
    justify-content: flex-end;
    align-items: flex-end;
    gap: 4px;
    height: 35px;
    margin-left: -2px;
    background-color: #f0f0f0;
    border-top: 1px solid #fff;
    overflow: hidden;
}

.cell {
    width: 120px;
    height: 9px;
    padding-left: 2px;
    font: 12px/14px "DejaVu Sans Mono", monospace;
    color: #222;
    border: 1px solid #999;
    border-width: 1px 0 0 1px;
}

.cell.last {
    width: 13px;
}

.mark {
    position: absolute;
    right: 19px;
    bottom: 3px;
    font: bold 16px/20px "DejaVu Sans", "Noto Sans CJK SC", sans-serif;
    color: #fff;
    -webkit-text-stroke: 2px #e82020;
    paint-order: stroke fill;
}
```
